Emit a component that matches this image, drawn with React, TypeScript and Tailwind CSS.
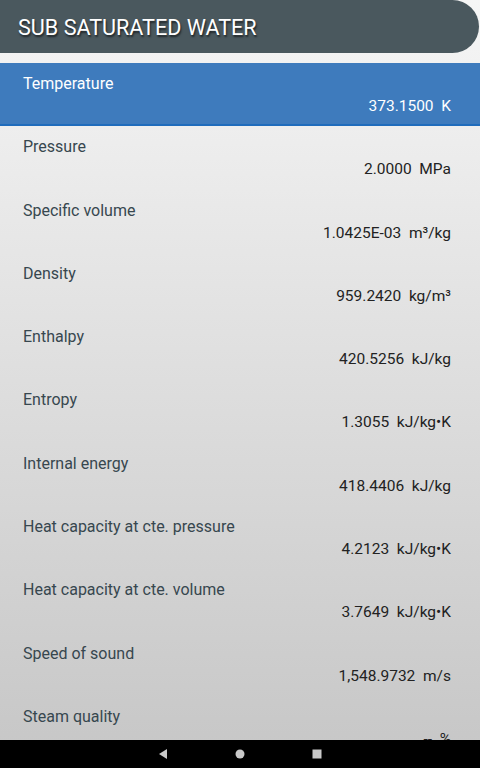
import React from 'react';

const rows: { label: string; value: string }[] = [
  { label: 'Temperature', value: '373.1500  K' },
  { label: 'Pressure', value: '2.0000  MPa' },
  { label: 'Specific volume', value: '1.0425E-03  m³/kg' },
  { label: 'Density', value: '959.2420  kg/m³' },
  { label: 'Enthalpy', value: '420.5256  kJ/kg' },
  { label: 'Entropy', value: '1.3055  kJ/kg•K' },
  { label: 'Internal energy', value: '418.4406  kJ/kg' },
  { label: 'Heat capacity at cte. pressure', value: '4.2123  kJ/kg•K' },
  { label: 'Heat capacity at cte. volume', value: '3.7649  kJ/kg•K' },
  { label: 'Speed of sound', value: '1,548.9732  m/s' },
  { label: 'Steam quality', value: '--  %' },
];

export default function App() {
  return (
    <div className="relative w-[480px] h-[768px] overflow-hidden bg-gradient-to-b from-[#f6f6f6] to-[#c6c6c6] font-['Roboto',sans-serif]">
      {/* Title bar */}
      <div className="h-[53px] w-[479px] bg-[#4a585e] rounded-r-[27px] flex items-center pl-[18px] pt-[3px]">
        <h1 className="text-white text-[21.6px] leading-none [text-shadow:1px_2px_2px_rgba(0,0,0,0.6)]">
          SUB SATURATED WATER
        </h1>
      </div>

      {/* Property list */}
      <div className="mt-[10px] flex flex-col">
        {rows.map((r, i) => (
          <div
            key={r.label}
            className={
              i === 0
                ? 'h-[63.3px] bg-[#3e7bbd] border-b-2 border-[#1f6cbc] pl-[23px] pr-[29px] pt-[10px]'
                : 'h-[63.3px] pl-[23px] pr-[29px] pt-[10px]'
            }
          >
            <div className={i === 0 ? 'text-white text-[16px] leading-[22px]' : 'text-[#37474f] text-[16px] leading-[22px]'}>
              {r.label}
            </div>
            <div
              className={
                i === 0
                  ? 'text-white text-[15.5px] leading-[22px] text-right whitespace-pre'
                  : 'text-[#222] text-[15.5px] leading-[22px] text-right whitespace-pre'
              }
            >
              {r.value}
            </div>
          </div>
        ))}
      </div>

      {/* Android nav bar */}
      <div className="absolute left-0 bottom-0 w-full h-[28px] bg-black flex items-center justify-center gap-[67px]">
        <svg width="10" height="12" viewBox="0 0 10 12">
          <path d="M9 1 L1 6 L9 11 Z" fill="#c9c9c9" />
        </svg>
        <svg width="10" height="10" viewBox="0 0 10 10">
          <circle cx="5" cy="5" r="4.5" fill="#c9c9c9" />
        </svg>
        <svg width="10" height="10" viewBox="0 0 10 10">
          <rect x="0.5" y="0.5" width="9" height="9" fill="#c9c9c9" />
        </svg>
      </div>
    </div>
  );
}
